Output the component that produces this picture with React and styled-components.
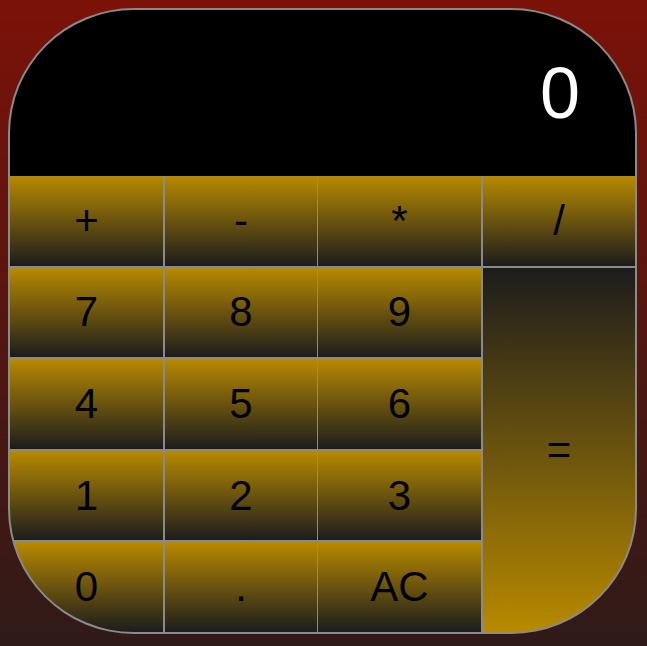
import styled, { createGlobalStyle } from "styled-components";

const keys = [
  { label: "+" }, { label: "-" }, { label: "*" }, { label: "/" },
  { label: "7" }, { label: "8" }, { label: "9" },
  { label: "=", equals: true },
  { label: "4" }, { label: "5" }, { label: "6" },
  { label: "1" }, { label: "2" }, { label: "3" },
  { label: "0" }, { label: "." }, { label: "AC" },
];

const App = () => {
  return (
    <>
      <Global />
      <Calculator>
        <Display>0</Display>
        <Keypad>
          {keys.map((k) => (
            <Key key={k.label} $equals={k.equals}>{k.label}</Key>
          ))}
        </Keypad>
      </Calculator>
    </>
  );
};

export default App;

const Global = createGlobalStyle`
  html, body {
    margin: 0;
    min-height: 100%;
  }
  body {
    min-height: 646px;
    padding: 8px;
    box-sizing: border-box;
    background: linear-gradient(#7b1208, #2f1a18);
    font-family: "Liberation Sans", Arial, sans-serif;
  }
`;

// 계산기 틀
const Calculator = styled.div`
  width: 629px;
  height: 626px;
  box-sizing: border-box;
  border: 2px solid #8a8a8a;
  border-radius: 20%;
  overflow: hidden;
  display: flex;
  flex-direction: column;
  background: #8a8a8a;
`;

const Display = styled.div`
  height: 166px;
  flex-shrink: 0;
  background: #000;
  color: #fff;
  font-size: 72px;
  display: flex;
  align-items: center;
  justify-content: flex-end;
  padding-right: 55px;
`;

// 버튼 영역 (1열, 3열 오른쪽 선은 2px)
const Keypad = styled.div`
  flex: 1;
  display: grid;
  grid-template-columns: 154px 152px 164px 152px;
  grid-template-rows: repeat(5, 1fr);
  column-gap: 1px;
  row-gap: 2px;
  background: #8a8a8a;
  & > :nth-child(1), & > :nth-child(5), & > :nth-child(9),
  & > :nth-child(12), & > :nth-child(15),
  & > :nth-child(3), & > :nth-child(7), & > :nth-child(11),
  & > :nth-child(14), & > :nth-child(17) {
    margin-right: 1px;
  }
`;

const Key = styled.button`
  border: none;
  margin: 0;
  padding: 0;
  font-family: "Liberation Sans", Arial, sans-serif;
  font-size: 42px;
  color: #000;
  cursor: pointer;
  background: ${(p) =>
    p.$equals
      ? "linear-gradient(#1c1c1c, #b88a00)"
      : "linear-gradient(#b88a00, #1c1c1c)"};
  grid-column: ${(p) => (p.$equals ? "4" : "auto")};
  grid-row: ${(p) => (p.$equals ? "2 / span 4" : "auto")};
`;
